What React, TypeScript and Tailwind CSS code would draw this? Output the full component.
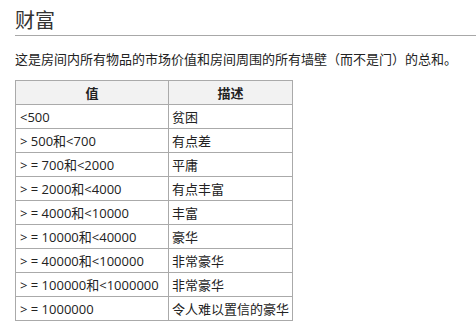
const rows: [string, string][] = [
  ["<500", "贫困"],
  ["> 500和<700", "有点差"],
  ["> = 700和<2000", "平庸"],
  ["> = 2000和<4000", "有点丰富"],
  ["> = 4000和<10000", "丰富"],
  ["> = 10000和<40000", "豪华"],
  ["> = 40000和<100000", "非常豪华"],
  ["> = 100000和<1000000", "非常豪华"],
  ["> = 1000000", "令人难以置信的豪华"],
];

export default function App() {
  return (
    <div
      className="w-[476px] h-[331px] bg-white text-[#222] overflow-hidden"
      style={{ fontFamily: '"Open Sans", "Noto Sans CJK SC", sans-serif' }}
    >
      <h2 className="ml-[15px] pt-[7px] text-[20px] leading-[28px] font-normal text-[#333] border-b border-[#a8a8a8]">
        财富
      </h2>
      <p className="ml-[15px] mt-[13px] text-[13px] leading-[20px]">
        这是房间内所有物品的市场价值和房间周围的所有墙壁（而不是门）的总和。
      </p>
      <table className="ml-[15px] mt-[11px] border-collapse text-[13px] leading-[20px]">
        <thead>
          <tr>
            <th className="w-[153px] h-[24px] p-0 bg-[#f2f2f2] border border-[#aaa] font-bold">值</th>
            <th className="w-[124px] h-[24px] p-0 bg-[#f2f2f2] border border-[#aaa] font-bold">描述</th>
          </tr>
        </thead>
        <tbody>
          {rows.map(([value, desc]) => (
            <tr key={value + desc}>
              <td className="h-[24px] px-[4px] py-0 border border-[#aaa] whitespace-nowrap">{value}</td>
              <td className="h-[24px] px-[3px] py-0 border border-[#aaa] whitespace-nowrap">{desc}</td>
            </tr>
          ))}
        </tbody>
      </table>
    </div>
  );
}
